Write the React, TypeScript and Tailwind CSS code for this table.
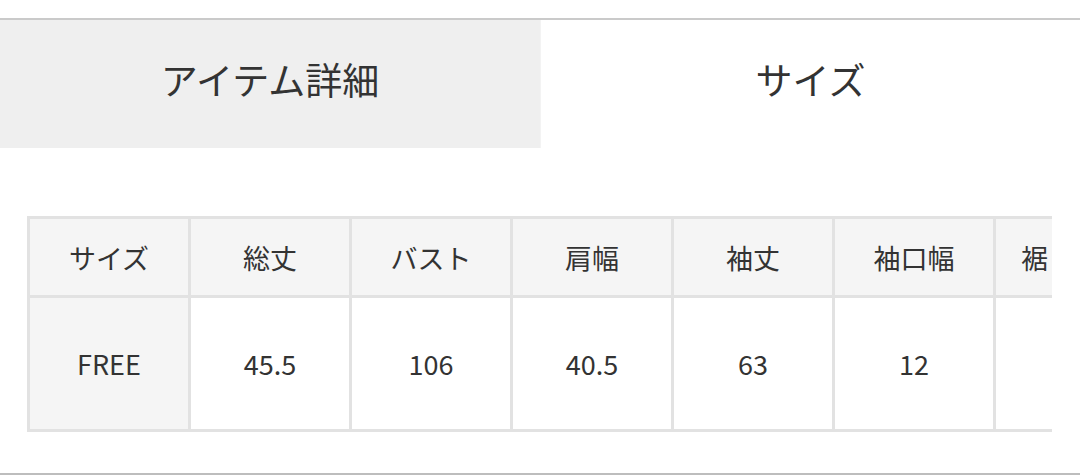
import React from 'react';

const FONT = "font-['Noto_Sans_CJK_JP','Noto_Sans',sans-serif]";

const HEADERS = ['サイズ', '総丈', 'バスト', '肩幅', '袖丈', '袖口幅', '裾リブ幅'];
const VALUES = ['FREE', '45.5', '106', '40.5', '63', '12', '9'];

// Tabbed product panel: "item details" / "size" with the size chart shown.
export default function App(): React.JSX.Element {
  return (
    <div className={`flex h-[475px] w-[1080px] flex-col bg-white text-[#333] ${FONT}`}>
      <div className="h-[18px]" />
      <div className="flex h-[130px] border-t-2 border-[#cacaca]">
        <div className="flex w-[540px] items-center justify-center bg-[#efefef] pb-[9px] text-[37px] leading-none">
          アイテム詳細
        </div>
        <div className="flex flex-1 items-center justify-center border-l border-[#f3f3f3] bg-white pb-[9px] text-[37px] leading-none">
          サイズ
        </div>
      </div>

      <div className="ml-[27px] mt-[68px] w-[1025px] overflow-hidden">
        <div className="grid w-max grid-cols-[repeat(7,158px)] grid-rows-[76px_131px] gap-[3px] border-[3px] border-[#e2e2e2] bg-[#e2e2e2] text-[27px] leading-none">
          {HEADERS.map((h) => (
            <div key={h} className="flex items-center justify-center bg-[#f5f5f5] whitespace-nowrap">
              {h}
            </div>
          ))}
          {VALUES.map((v, i) => (
            <div
              key={i}
              className={
                'flex items-center justify-center ' + (i === 0 ? 'bg-[#f5f5f5]' : 'bg-white')
              }
            >
              {v}
            </div>
          ))}
        </div>
      </div>

      <div className="mt-auto h-[2px] bg-[#bdbdbd]" />
    </div>
  );
}
